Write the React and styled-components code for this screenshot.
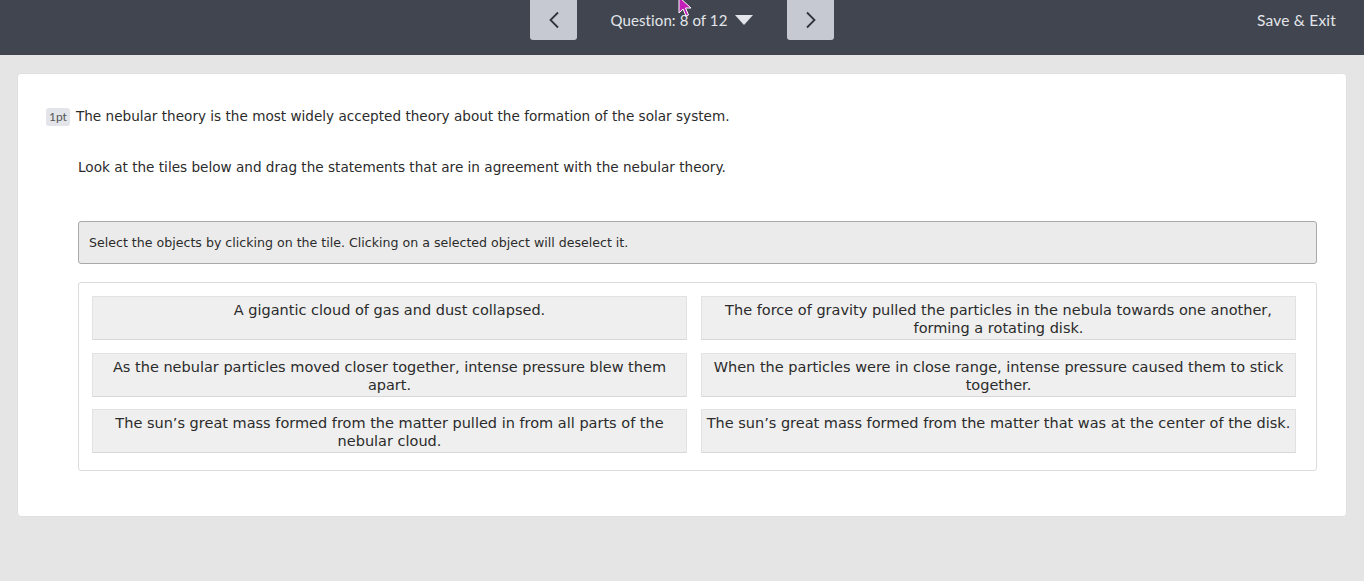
import React from 'react';
import styled, { createGlobalStyle } from 'styled-components';

const GlobalStyle = createGlobalStyle`
  html, body {
    margin: 0;
    padding: 0;
    background: #e5e5e5;
    height: 100%;
  }
  body {
    font-family: "DejaVu Sans", Verdana, sans-serif;
  }
`;

const Page = styled.div`
  min-height: 581px;
  background: #e5e5e5;
  position: relative;
  overflow: hidden;
`;

const TopBar = styled.header`
  height: 55px;
  background: #40454f;
  display: flex;
  align-items: flex-start;
  justify-content: center;
  position: relative;
  font-family: Lato, "Open Sans", sans-serif;
  color: #e3e5ea;
`;

const NavButton = styled.button`
  width: 47px;
  height: 40px;
  border: none;
  border-radius: 0 0 3px 3px;
  background: #c6c9d1;
  color: #2f333b;
  display: flex;
  align-items: center;
  justify-content: center;
  padding: 0;
  cursor: pointer;
`;

const QuestionPicker = styled.div`
  width: 210px;
  height: 40px;
  display: flex;
  align-items: center;
  justify-content: center;
  gap: 8px;
  font-size: 15px;
  letter-spacing: 0.1px;
`;

const SaveExit = styled.span`
  position: absolute;
  right: 28px;
  top: 11px;
  font-size: 15.5px;
  letter-spacing: 0.2px;
`;

const Cursor = styled.svg`
  position: absolute;
  left: 678px;
  top: -4px;
`;

const Card = styled.main`
  margin: 18px 17px 0;
  background: #fff;
  border-radius: 4px;
  border: 1px solid #e0e0e0;
  padding: 31px 29px 45px 28px;
  color: #2b2b2b;
`;

const PromptRow = styled.div`
  display: flex;
  align-items: center;
  gap: 6px;
`;

const Points = styled.span`
  font-family: Lato, "Open Sans", sans-serif;
  font-size: 12px;
  color: #555;
  background: #e3e5ea;
  border-radius: 3px;
  padding: 2px 3px;
  line-height: 14px;
  margin-top: 3px;
`;

const Text = styled.p`
  margin: 0;
  font-size: 13.6px;
  line-height: 18px;
`;

const SubText = styled(Text)`
  margin: 32px 0 0 32px;
`;

const Body = styled.div`
  margin-left: 32px;
`;

const Instructions = styled.div`
  margin-top: 45px;
  height: 41px;
  background: #ebebeb;
  border: 1px solid #a9a9a9;
  border-radius: 3px;
  display: flex;
  align-items: center;
  padding: 0 10px;
  font-size: 12.6px;
  color: #2b2b2b;
`;

const TileArea = styled.div`
  margin-top: 18px;
  border: 1px solid #dcdcdc;
  border-radius: 3px;
  padding: 13px 22px 17px 13px;
  display: grid;
  grid-template-columns: 595px 595px;
  column-gap: 14px;
  row-gap: 12.5px;
`;

const Tile = styled.div`
  height: 44px;
  box-sizing: border-box;
  background: #efefef;
  border: 1px solid #e2e2e2;
  border-bottom-color: #d8d8d8;
  padding: 4px 4px 0;
  text-align: center;
  font-size: 14.5px;
  line-height: 18px;
  color: #2b2b2b;
  cursor: pointer;
`;

const tiles = [
  'A gigantic cloud of gas and dust collapsed.',
  'The force of gravity pulled the particles in the nebula towards one another, forming a rotating disk.',
  'As the nebular particles moved closer together, intense pressure blew them apart.',
  'When the particles were in close range, intense pressure caused them to stick together.',
  'The sun\u2019s great mass formed from the matter pulled in from all parts of the nebular cloud.',
  'The sun\u2019s great mass formed from the matter that was at the center of the disk.',
];

const Chevron = ({ dir }) => (
  <svg width="12" height="18" viewBox="0 0 12 18" fill="none">
    <path
      d={dir === 'left' ? 'M10 1.5 L2.5 9 L10 16.5' : 'M2 1.5 L9.5 9 L2 16.5'}
      stroke="currentColor"
      strokeWidth="1.8"
    />
  </svg>
);

const App = () => (
  <Page>
    <GlobalStyle />
    <TopBar>
      <NavButton aria-label="Previous">
        <Chevron dir="left" />
      </NavButton>
      <QuestionPicker>
        Question: 8 of 12
        <svg width="18" height="10" viewBox="0 0 18 10">
          <path d="M0 0 H18 L9 10 Z" fill="#e3e5ea" />
        </svg>
      </QuestionPicker>
      <NavButton aria-label="Next">
        <Chevron dir="right" />
      </NavButton>
      <SaveExit>Save &amp; Exit</SaveExit>
      <Cursor width="14" height="22" viewBox="0 0 14 22">
        <path d="M1 1 L1 17 L5 13 L8 20 L10.5 19 L7.5 12 L13 12 Z" fill="#c21fb8" stroke="#fff" strokeWidth="1" />
      </Cursor>
    </TopBar>
    <Card>
      <PromptRow>
        <Points>1pt</Points>
        <Text>The nebular theory is the most widely accepted theory about the formation of the solar system.</Text>
      </PromptRow>
      <SubText>Look at the tiles below and drag the statements that are in agreement with the nebular theory.</SubText>
      <Body>
        <Instructions>Select the objects by clicking on the tile. Clicking on a selected object will deselect it.</Instructions>
        <TileArea>
          {tiles.map((t) => (
            <Tile key={t}>{t}</Tile>
          ))}
        </TileArea>
      </Body>
    </Card>
  </Page>
);

export default App;
